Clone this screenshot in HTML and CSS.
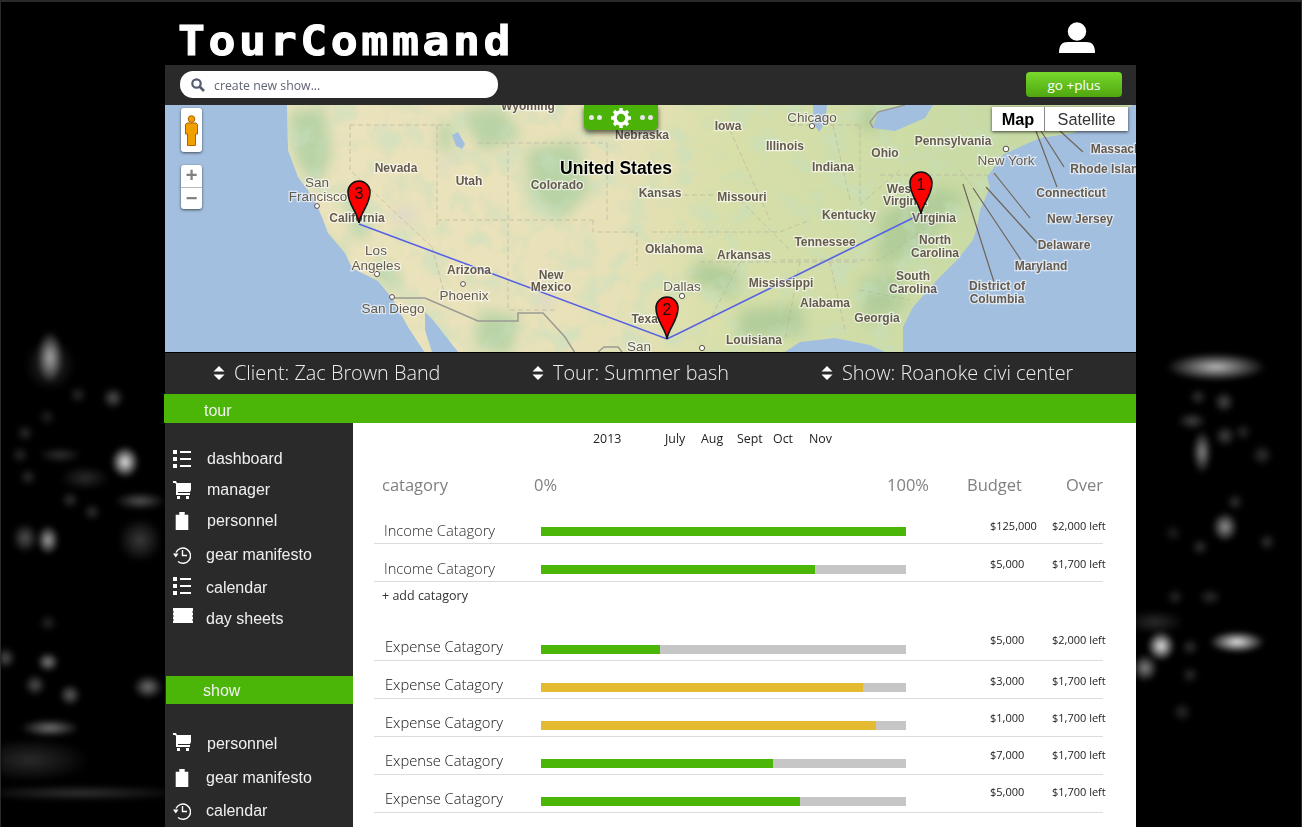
FILE: index.html
```html
<!DOCTYPE html>
<html lang="en">
<head>
    <meta charset="UTF-8">
    <meta name="viewport" content="width=device-width, initial-scale=1.0">
    <title>TourCommand</title>
    <link rel="stylesheet" href="styles.css">
</head>
<body>
    <div class="backdrop"></div>

    <svg class="icon-defs" aria-hidden="true">
        <defs>
            <symbol id="i-list" viewBox="0 0 18 18">
                <path fill="#fff" d="M0 0h4v4H0zM0 7h4v4H0zM0 14h4v4H0zM7 1h11v2H7zM7 8h11v2H7zM7 15h11v2H7z"/>
            </symbol>
            <symbol id="i-cart" viewBox="0 0 18 18">
                <path fill="#fff" d="M0 0h3l1 2h14v7l-1 2H5v1h12v2H3V3L2 2H0zM4 15h3v3H4zM13 15h3v3h-3z"/>
            </symbol>
            <symbol id="i-clip" viewBox="0 0 18 20">
                <path fill="#fff" d="M2 3h4V0h6v3h4v17H2z"/>
            </symbol>
            <symbol id="i-history" viewBox="0 0 18 18">
                <path fill="none" stroke="#fff" stroke-width="1.400" d="M3 6.500A7.600 7.600 0 1 1 5 15.500M9.500 4v5.500h4.500"/>
                <path fill="#fff" d="M0 7.500h5.500l-2.700 4z"/>
            </symbol>
            <symbol id="i-ticket" viewBox="0 0 20 16">
                <path fill="#fff" d="M0 0h20v3l-1 1 1 1v2l-1 1 1 1v2l-1 1 1 1v2H0v-2l1-1-1-1V9l1-1-1-1V5l1-1-1-1z"/>
            </symbol>
            <symbol id="i-updown" viewBox="0 0 12 14">
                <path fill="#fff" d="M6 0l5.500 5.500H.5zM6 14L.5 8.500h11z"/>
            </symbol>
            <symbol id="i-pin" viewBox="0 0 24 44">
                <path fill="#f00" stroke="#111" stroke-width="1.600" d="M12 43C10.500 32 1 25 1 12a11 11 0 0 1 22 0C23 25 13.500 32 12 43z"/>
            </symbol>
        </defs>
    </svg>

    <div class="page">
        <div class="header">
            <div class="logo">TourCommand</div>
            <svg class="user-icon" viewBox="0 0 36 31">
                <circle cx="18" cy="9.500" r="9.200" fill="#fff"/>
                <path fill="#fff" d="M0 31c0-8 3-11 9-11h18c6 0 9 3 9 11z"/>
            </svg>
        </div>

        <div class="search-bar">
            <div class="search-box">
                <svg class="search-icon" viewBox="0 0 14 14">
                    <circle cx="5.500" cy="5.500" r="4.200" fill="none" stroke="#565c70" stroke-width="2.200"/>
                    <path d="M8.500 8.500l4.500 4.500" stroke="#565c70" stroke-width="2.600"/>
                </svg>
                <input type="text" class="search-input" placeholder="create new show...">
            </div>
            <button class="go-button">go +plus</button>
        </div>

        <div class="map">
            <svg class="map-canvas" viewBox="165 105 971 247">
                <defs>
                    <linearGradient id="landFill" gradientUnits="userSpaceOnUse" x1="287" y1="0" x2="1000" y2="0">
                        <stop offset="0" stop-color="#ebe3bd"/>
                        <stop offset="0.45" stop-color="#e8e1b8"/>
                        <stop offset="0.62" stop-color="#d8dfa9"/>
                        <stop offset="1" stop-color="#c8daa4"/>
                    </linearGradient>
                    <clipPath id="landClip">
                        <path d="M287 105L288 150 298 177 313 197 322 217 328 233 345 253 352 268 378 281 392 298 408 327 425 353H783L800 342 835 338 870 345 885 352H903V327L913 307 937 280 957 260 973 240 977 227 980 210 990 187 987 177 1003 155 1040 138 1073 133 1110 115 1133 105z"/>
                    </clipPath>
                    <filter id="soft" x="-30%" y="-30%" width="160%" height="160%">
                        <feGaussianBlur stdDeviation="7"/>
                    </filter>
                    <filter id="terrain" x="0" y="0" width="100%" height="100%">
                        <feTurbulence type="fractalNoise" baseFrequency="0.04" numOctaves="4" seed="7"/>
                        <feColorMatrix type="matrix" values="0 0 0 0 0.56  0 0 0 0 0.74  0 0 0 0 0.52  3.600 0 0 0 -1.700"/>
                    </filter>
                </defs>

                <rect x="165" y="105" width="971" height="247" fill="#a3bfdf"/>

                <g clip-path="url(#landClip)">
                    <rect x="280" y="105" width="860" height="247" fill="url(#landFill)"/>
                    <g class="forest" filter="url(#soft)">
                        <path d="M288 112l36-6 8 50-14 30-22-22zM345 190l16 6 8 40-14 4zM378 260l22 14-4 16-22-14z"/>
                        <path d="M460 112l40-6 22 30-40 16zM525 150l50-10 16 50-30 30-30-20zM440 120l14 4-4 30-12-4z"/>
                        <path d="M320 232l24 20-6 10-24-20zM480 310l40 6-10 40-36-10z"/>
                    </g>
                    <g class="forest-deep" filter="url(#soft)">
                        <path d="M880 215l60-30 26 12-50 60-40 10zM700 260l40 10-4 30-50-20zM860 110l30-4 0 20-30 6z"/>
                        <path d="M860 280l40-10 4 40-40 14zM740 310l60-6 6 30-70 6z"/>
                    </g>
                    <rect class="terrain" x="280" y="105" width="860" height="247" filter="url(#terrain)"/>
                    <g class="salt" filter="url(#soft)">
                        <ellipse cx="405" cy="215" rx="13" ry="9"/>
                        <ellipse cx="447" cy="161" rx="8" ry="4"/>
                        <ellipse cx="545" cy="300" rx="8" ry="10"/>
                    </g>
                </g>

                <path class="water" d="M425 312L433 320 458 352H432L425 330zM452 135l6-3 7 12-3 5-6-3zM813 105h14l-2 18-6 9-5-8zM873 128l5-16 27-7h28l-8 13-30 13zM1003 155l30-14 4 3-32 14z"/>
                <path class="border-line" d="M392 298l33 0 53 23h40v-8h25l22 24 10 16M878 112l27-7M873 128l-3-6 8-10M598 352l6-5h14l4 5"/>

                <path class="state-line" d="M350 125H450M350 125V170L432 247M437 125V225M437 220H593M508 143V310M478 143H607M607 143V220M593 220V232H637V265M432 247L446 300M555 310H508M652 232H780L810 220M660 195H740M730 130L770 220M790 125H860M833 125L850 200M860 125V205L900 170M880 175H1000M780 260H880L930 225M700 262H860M800 262L785 340M830 262L845 330M860 290L910 300M960 170L975 190"/>
                <path class="state-line" d="M740 200L790 250M740 262L710 320"/>

                <g class="leader">
                    <path d="M1036 131L1057 187M1041 131L1064 167M1060 131L1083 152M994 173L1030 218M973 188L1021 260M986 187L1037 243M963 184L994 282"/>
                </g>

                <g class="dots">
                    <circle cx="317" cy="206" r="2.400"/>
                    <circle cx="377" cy="274" r="2.600"/>
                    <circle cx="392" cy="297" r="2.400"/>
                    <circle cx="463" cy="284" r="2.400"/>
                    <circle cx="682" cy="296" r="2.600"/>
                    <circle cx="812" cy="126" r="2.600"/>
                    <circle cx="1006" cy="149" r="2.800"/>
                    <circle cx="702" cy="348" r="2.600"/>
                </g>

                <polyline class="route" points="359,224 667,339 921,214"/>

                <g class="labels">
                    <text x="528" y="110">Wyoming</text>
                    <text x="642" y="139">Nebraska</text>
                    <text x="728" y="130">Iowa</text>
                    <text x="812" y="122" class="city">Chicago</text>
                    <text x="785" y="150">Illinois</text>
                    <text x="833" y="171">Indiana</text>
                    <text x="885" y="157">Ohio</text>
                    <text x="953" y="145">Pennsylvania</text>
                    <text x="1006" y="165" class="city">New York</text>
                    <text x="1116" y="153">Massach</text>
                    <text x="1108" y="173">Rhode Island</text>
                    <text x="1071" y="197">Connecticut</text>
                    <text x="1080" y="223">New Jersey</text>
                    <text x="1064" y="249">Delaware</text>
                    <text x="1041" y="270">Maryland</text>
                    <text x="997" y="290">District of</text>
                    <text x="997" y="303">Columbia</text>
                    <text x="934" y="222">Virginia</text>
                    <text x="901" y="193">West</text>
                    <text x="905" y="205">Virginia</text>
                    <text x="935" y="244">North</text>
                    <text x="935" y="257">Carolina</text>
                    <text x="913" y="280">South</text>
                    <text x="913" y="293">Carolina</text>
                    <text x="877" y="322">Georgia</text>
                    <text x="825" y="307">Alabama</text>
                    <text x="781" y="287">Mississippi</text>
                    <text x="744" y="259">Arkansas</text>
                    <text x="825" y="246">Tennessee</text>
                    <text x="849" y="219">Kentucky</text>
                    <text x="742" y="201">Missouri</text>
                    <text x="674" y="253">Oklahoma</text>
                    <text x="660" y="197">Kansas</text>
                    <text x="682" y="291" class="city">Dallas</text>
                    <text x="648" y="323">Texas</text>
                    <text x="754" y="344">Louisiana</text>
                    <text x="639" y="351" class="city">San</text>
                    <text x="557" y="189">Colorado</text>
                    <text x="469" y="185">Utah</text>
                    <text x="396" y="172">Nevada</text>
                    <text x="357" y="222">California</text>
                    <text x="317" y="187" class="city">San</text>
                    <text x="318" y="201" class="city">Francisco</text>
                    <text x="376" y="255" class="city">Los</text>
                    <text x="376" y="270" class="city">Angeles</text>
                    <text x="469" y="274">Arizona</text>
                    <text x="464" y="300" class="city">Phoenix</text>
                    <text x="551" y="279">New</text>
                    <text x="551" y="291">Mexico</text>
                    <text x="393" y="313" class="city">San Diego</text>
                    <text x="616" y="174" class="country">United States</text>
                </g>

                <use href="#i-pin" x="347" y="180" width="24" height="44"/>
                <use href="#i-pin" x="655" y="296" width="24" height="44"/>
                <use href="#i-pin" x="909" y="171" width="24" height="44"/>
                <text class="pin-num" x="359" y="199">3</text>
                <text class="pin-num" x="667" y="315">2</text>
                <text class="pin-num" x="921" y="190">1</text>
            </svg>

            <div class="pegman-box">
                <svg class="pegman" viewBox="0 0 13 31">
                    <circle cx="6.500" cy="4" r="3.300" fill="#f0a000" stroke="#b06000"/>
                    <path fill="#f0a000" stroke="#b06000" d="M2 8h9l1.500 1.500v9.500h-2v11.500h-8V19h-2V9.500z"/>
                </svg>
            </div>
            <div class="zoom-box">
                <div class="zoom-step">+</div>
                <div class="zoom-step">−</div>
            </div>
            <div class="gear-tab">
                <span class="gear-dot"></span><span class="gear-dot"></span>
                <svg class="gear" viewBox="0 0 20 20">
                    <circle cx="10" cy="10" r="6" fill="none" stroke="#fff" stroke-width="3.600"/>
                    <path stroke="#fff" stroke-width="3.400" d="M10 0v4M10 16v4M0 10h4M16 10h4M3 3l3 3M14 14l3 3M17 3l-3 3M6 14l-3 3"/>
                </svg>
                <span class="gear-dot"></span><span class="gear-dot"></span>
            </div>
            <div class="map-type">
                <div class="map-type-item map-type-on">Map</div>
                <div class="map-type-item">Satellite</div>
            </div>
        </div>

        <div class="selectors">
            <div class="selector sel-client"><svg class="updown"><use href="#i-updown"/></svg>Client: Zac Brown Band</div>
            <div class="selector sel-tour"><svg class="updown"><use href="#i-updown"/></svg>Tour: Summer bash</div>
            <div class="selector"><svg class="updown"><use href="#i-updown"/></svg>Show: Roanoke civi center</div>
        </div>

        <div class="tab-bar">
            <div class="tab-tour">tour</div>
            <div class="tab-fill"></div>
        </div>

        <div class="columns">
            <div class="sidebar">
                <ul class="nav-list nav-tour">
                    <li class="nav-item"><svg class="nav-icon"><use href="#i-list"/></svg>dashboard</li>
                    <li class="nav-item"><svg class="nav-icon"><use href="#i-cart"/></svg>manager</li>
                    <li class="nav-item"><svg class="nav-icon"><use href="#i-clip"/></svg>personnel</li>
                    <li class="nav-item nudge gap3"><svg class="nav-icon"><use href="#i-history"/></svg>gear manifesto</li>
                    <li class="nav-item nudge gap2"><svg class="nav-icon lift2"><use href="#i-list"/></svg>calendar</li>
                    <li class="nav-item nudge"><svg class="nav-icon ticket"><use href="#i-ticket"/></svg>day sheets</li>
                </ul>
                <div class="tab-show">show</div>
                <ul class="nav-list nav-show">
                    <li class="nav-item"><svg class="nav-icon lift2"><use href="#i-cart"/></svg>personnel</li>
                    <li class="nav-item nudge gap3"><svg class="nav-icon"><use href="#i-clip"/></svg>gear manifesto</li>
                    <li class="nav-item nudge gap2"><svg class="nav-icon"><use href="#i-history"/></svg>calendar</li>
                </ul>
            </div>

            <div class="content">
                <div class="timeline">
                    <span>2013</span><span>July</span><span>Aug</span><span>Sept</span><span>Oct</span><span>Nov</span>
                </div>

                <div class="table-head">
                    <span>catagory</span>
                    <span class="scale"><span>0%</span><span>100%</span></span>
                    <span>Budget</span>
                    <span>Over</span>
                </div>

                <div class="budget-rows">
                    <div class="row">
                        <span class="row-name">Income Catagory</span>
                        <div class="bar"><div class="fill" style="width:100%"></div></div>
                        <span class="amount">$125,000</span>
                        <span class="amount">$2,000 left</span>
                    </div>
                    <div class="row">
                        <span class="row-name">Income Catagory</span>
                        <div class="bar"><div class="fill" style="width:75%"></div></div>
                        <span class="amount">$5,000</span>
                        <span class="amount">$1,700 left</span>
                    </div>
                </div>

                <div class="add-row">+ add catagory</div>

                <div class="budget-rows expenses">
                    <div class="row">
                        <span class="row-name">Expense Catagory</span>
                        <div class="bar"><div class="fill" style="width:32.6%"></div></div>
                        <span class="amount up3">$5,000</span>
                        <span class="amount up3">$2,000 left</span>
                    </div>
                    <div class="row">
                        <span class="row-name">Expense Catagory</span>
                        <div class="bar"><div class="fill warn" style="width:88.2%"></div></div>
                        <span class="amount">$3,000</span>
                        <span class="amount">$1,700 left</span>
                    </div>
                    <div class="row">
                        <span class="row-name">Expense Catagory</span>
                        <div class="bar"><div class="fill warn" style="width:91.8%"></div></div>
                        <span class="amount up1">$1,000</span>
                        <span class="amount up1">$1,700 left</span>
                    </div>
                    <div class="row">
                        <span class="row-name">Expense Catagory</span>
                        <div class="bar"><div class="fill" style="width:63.6%"></div></div>
                        <span class="amount up2">$7,000</span>
                        <span class="amount up2">$1,700 left</span>
                    </div>
                    <div class="row">
                        <span class="row-name">Expense Catagory</span>
                        <div class="bar"><div class="fill" style="width:71%"></div></div>
                        <span class="amount up3">$5,000</span>
                        <span class="amount up3">$1,700 left</span>
                    </div>
                </div>
            </div>
        </div>
    </div>
</body>
</html>
```

FILE: styles.css
```css
html {
    height: 100%;
    background-color: #000;
}

body {
    box-sizing: border-box;
    height: 827px;
    margin: 0;
    overflow: hidden;
    border-top: 2px solid #2a2a2a;
    border-left: 1px solid #2a2a2a;
    border-right: 1px solid #2a2a2a;
    font-family: "Open Sans", sans-serif;
}

/* blurred city lights behind the page */
.backdrop {
    position: fixed;
    top: 0;
    left: 0;
    z-index: -1;
    width: 1302px;
    height: 827px;
    filter: blur(2.500px);
    background-repeat: no-repeat;
    background-image:
        /* left side */
        radial-gradient(ellipse 13px 26px at 50px 357px, #aaa, transparent),
        radial-gradient(ellipse 26px 26px at 50px 365px, #2a2a2a, transparent),
        radial-gradient(ellipse 14px 16px at 125px 462px, #eee, transparent),
        radial-gradient(ellipse 11px 11px at 113px 398px, #555, transparent),
        radial-gradient(ellipse 9px 9px at 78px 395px, #2c2c2c, transparent),
        radial-gradient(ellipse 9px 9px at 25px 433px, #2e2e2e, transparent),
        radial-gradient(ellipse 9px 9px at 47px 417px, #222, transparent),
        radial-gradient(ellipse 9px 9px at 20px 455px, #2a2a2a, transparent),
        radial-gradient(ellipse 9px 9px at 28px 477px, #2e2e2e, transparent),
        radial-gradient(ellipse 9px 9px at 70px 500px, #333, transparent),
        radial-gradient(ellipse 9px 9px at 92px 512px, #333, transparent),
        radial-gradient(ellipse 26px 9px at 140px 501px, #555, transparent),
        radial-gradient(ellipse 22px 22px at 140px 540px, #3a3a3a, transparent),
        radial-gradient(ellipse 11px 15px at 48px 540px, #aaa, transparent),
        radial-gradient(ellipse 13px 15px at 25px 538px, #555, transparent),
        radial-gradient(ellipse 25px 12px at 85px 478px, #2c2c2c, transparent),
        radial-gradient(ellipse 22px 8px at 60px 455px, #333, transparent),
        radial-gradient(ellipse 11px 10px at 48px 662px, #888, transparent),
        radial-gradient(ellipse 11px 11px at 5px 658px, #555, transparent),
        radial-gradient(ellipse 11px 11px at 70px 695px, #666, transparent),
        radial-gradient(ellipse 11px 11px at 35px 685px, #555, transparent),
        radial-gradient(ellipse 9px 9px at 48px 623px, #2a2a2a, transparent),
        radial-gradient(ellipse 30px 9px at 50px 728px, #777, transparent),
        radial-gradient(ellipse 15px 12px at 148px 687px, #777, transparent),
        radial-gradient(ellipse 60px 22px at 30px 760px, #2a2a2a, transparent),
        radial-gradient(ellipse 110px 8px at 80px 793px, #333, transparent),
        /* right side */
        radial-gradient(ellipse 50px 14px at 1216px 367px, #bbb, transparent),
        radial-gradient(ellipse 10px 22px at 1202px 452px, #888, transparent),
        radial-gradient(ellipse 11px 11px at 1224px 402px, #4a4a4a, transparent),
        radial-gradient(ellipse 9px 9px at 1198px 397px, #333, transparent),
        radial-gradient(ellipse 15px 9px at 1192px 421px, #444, transparent),
        radial-gradient(ellipse 11px 11px at 1225px 436px, #444, transparent),
        radial-gradient(ellipse 9px 9px at 1243px 432px, #2c2c2c, transparent),
        radial-gradient(ellipse 11px 11px at 1262px 455px, #333, transparent),
        radial-gradient(ellipse 13px 15px at 1225px 527px, #999, transparent),
        radial-gradient(ellipse 14px 15px at 1161px 646px, #eee, transparent),
        radial-gradient(ellipse 13px 14px at 1145px 668px, #888, transparent),
        radial-gradient(ellipse 28px 11px at 1237px 642px, #eee, transparent),
        radial-gradient(ellipse 30px 12px at 1155px 622px, #2c2c2c, transparent),
        radial-gradient(ellipse 9px 9px at 1267px 542px, #333, transparent),
        radial-gradient(ellipse 9px 9px at 1235px 502px, #333, transparent),
        radial-gradient(ellipse 9px 9px at 1200px 547px, #333, transparent),
        radial-gradient(ellipse 9px 9px at 1173px 533px, #222, transparent),
        radial-gradient(ellipse 9px 9px at 1175px 597px, #2a2a2a, transparent),
        radial-gradient(ellipse 12px 9px at 1210px 597px, #2e2e2e, transparent),
        radial-gradient(ellipse 9px 9px at 1190px 647px, #333, transparent),
        radial-gradient(ellipse 9px 9px at 1190px 675px, #2e2e2e, transparent),
        radial-gradient(ellipse 10px 10px at 1182px 712px, #2c2c2c, transparent);
}

.icon-defs {
    display: none;
}

.page {
    width: 971px;
    margin-left: 164px;
}

/* header */
.header {
    display: flex;
    justify-content: space-between;
    height: 63px;
    padding: 0 41px 0 13px;
}

.logo {
    font-family: "DejaVu Sans Mono", monospace;
    font-weight: bold;
    font-size: 40px;
    line-height: 31px;
    letter-spacing: 3.200px;
    padding-top: 24px;
    color: #fff;
    -webkit-text-stroke: 1px #fff;
    transform: scaleX(1.12);
    transform-origin: left top;
}

.user-icon {
    width: 36px;
    height: 31px;
    margin-top: 20px;
}

/* search row */
.search-bar {
    display: flex;
    align-items: center;
    justify-content: space-between;
    height: 40px;
    padding: 0 14px 0 15px;
    background-color: #2a2a2a;
}

.search-box {
    display: flex;
    align-items: center;
    box-sizing: border-box;
    width: 318px;
    height: 27px;
    margin-top: -1px;
    padding-left: 11px;
    background-color: #fff;
    border-radius: 13px;
}

.search-icon {
    width: 14px;
    height: 14px;
    margin-right: 9px;
}

.search-input {
    flex: 1;
    min-width: 0;
    padding: 2px 0 0;
    border: none;
    outline: none;
    background: none;
    font-family: "Open Sans", sans-serif;
    font-size: 12.300px;
}

.search-input::placeholder {
    color: #5f6474;
    opacity: 1;
}

.go-button {
    width: 96px;
    height: 25px;
    margin-top: -1px;
    padding: 0;
    border: none;
    border-radius: 4px;
    background: linear-gradient(#78d92c, #4fa60f);
    color: #fff;
    font-family: "Open Sans", sans-serif;
    font-size: 13.500px;
}

/* map */
.map {
    position: relative;
    height: 247px;
    overflow: hidden;
    border-bottom: 1px solid #000;
}

.map-canvas {
    display: block;
    width: 971px;
    height: 247px;
    filter: blur(0.350px);
}

.forest path {
    fill: #b9d3a6;
}

.forest-deep path {
    fill: #b2cd9a;
}

.terrain {
    opacity: 0.5;
}

.salt ellipse {
    fill: #dcd8c8;
}

.water {
    fill: #a3bfdf;
}

.border-line {
    fill: none;
    stroke: #9a9a94;
    stroke-width: 1.500;
}

.state-line {
    fill: none;
    stroke: #b5b29e;
    stroke-width: 0.800;
    stroke-dasharray: 5 3;
    opacity: 0.8;
}

.leader path {
    fill: none;
    stroke: #6f655a;
    stroke-width: 1.200;
}

.dots circle {
    fill: #fff;
    stroke: #5c5046;
    stroke-width: 1;
}

.route {
    fill: none;
    stroke: #5660e4;
    stroke-width: 1.500;
}

.labels text {
    font-family: "Liberation Sans", sans-serif;
    font-size: 12px;
    font-weight: bold;
    fill: #655a4e;
    text-anchor: middle;
    paint-order: stroke;
    stroke: rgba(255, 255, 255, 0.6);
    stroke-width: 2.500px;
}

.labels .city {
    font-weight: normal;
    font-size: 13.500px;
}

.labels .country {
    font-size: 17.500px;
    fill: #000;
}

.pin-num {
    font-family: "Liberation Sans", sans-serif;
    font-size: 16px;
    fill: #111;
    text-anchor: middle;
}

.pegman-box {
    position: absolute;
    left: 16px;
    top: 3px;
    display: flex;
    justify-content: center;
    align-items: center;
    width: 21px;
    height: 44px;
    background-color: #fff;
    border-radius: 3px;
    box-shadow: 0 1px 3px rgba(0, 0, 0, 0.6);
}

.pegman {
    width: 13px;
    height: 31px;
}

.zoom-box {
    position: absolute;
    left: 16px;
    top: 60px;
    width: 21px;
    background-color: #fff;
    border-radius: 3px;
    box-shadow: 0 1px 3px rgba(0, 0, 0, 0.6);
}

.zoom-step {
    height: 22px;
    font-family: "Liberation Sans", sans-serif;
    font-size: 20px;
    font-weight: bold;
    line-height: 21px;
    text-align: center;
    color: #808080;
}

.zoom-step + .zoom-step {
    border-top: 1px solid #bbb;
    height: 21px;
}

.gear-tab {
    position: absolute;
    left: 419px;
    top: 0;
    display: flex;
    align-items: center;
    justify-content: center;
    gap: 3px;
    width: 74px;
    height: 25px;
    background-color: #4bb308;
    border-radius: 0 0 5px 5px;
    box-shadow: 0 3px 5px rgba(0, 0, 0, 0.6);
}

.gear-dot {
    width: 5px;
    height: 5px;
    border-radius: 50%;
    background-color: #e6e6e6;
}

.gear {
    width: 20px;
    height: 20px;
    margin: 0 6px;
}

.map-type {
    position: absolute;
    left: 827px;
    top: 2px;
    display: flex;
    height: 24px;
    background-color: #fff;
    box-shadow: 0 1px 3px rgba(0, 0, 0, 0.7);
    font-family: "Liberation Sans", sans-serif;
    font-size: 16.300px;
    line-height: 24px;
    color: #333;
}

.map-type-item {
    width: 83px;
    text-align: center;
}

.map-type-on {
    width: 52px;
    border-right: 1px solid #888;
    font-weight: bold;
    color: #000;
}

/* client, tour, show pickers */
.selectors {
    display: flex;
    box-sizing: border-box;
    height: 41px;
    padding-bottom: 2px;
    background-color: #2a2a2a;
    color: #ededed;
    font-size: 19.850px;
    font-weight: 300;
    line-height: 39px;
}

.selector {
    display: flex;
    align-items: center;
}

.updown {
    width: 12px;
    height: 14px;
    margin-right: 9px;
}

.sel-client {
    box-sizing: border-box;
    width: 367px;
    padding-left: 48px;
}

.sel-tour {
    width: 289px;
}

/* green tab bar */
.tab-bar {
    display: flex;
    height: 30px;
}

.tab-tour {
    box-sizing: border-box;
    width: 189px;
    height: 29px;
    margin-left: -1px;
    padding-left: 40px;
    background-color: #4bb508;
    font-family: "Liberation Sans", sans-serif;
    font-size: 16px;
    line-height: 33px;
    color: #f2f2f2;
}

.tab-fill {
    flex: 1;
    background-color: #4bb508;
}

/* columns */
.columns {
    display: flex;
    margin-top: -1px;
    height: 404px;
}

.sidebar {
    width: 188px;
    background-color: #2a2a2a;
    font-family: "Liberation Sans", sans-serif;
    font-size: 16px;
    color: #efefef;
}

.nav-list {
    margin: 0;
    padding: 0;
    list-style-type: none;
}

.nav-tour {
    padding-top: 20px;
}

.nav-show {
    padding-top: 24px;
}

.nav-item {
    display: flex;
    align-items: center;
    height: 31px;
    padding-left: 8px;
}

.nav-icon {
    flex: none;
    width: 18px;
    height: 18px;
    margin-right: 16px;
}

.nudge .nav-icon {
    margin-right: 15px;
}

.nav-item .lift2 {
    margin-top: -4px;
}

.nudge .ticket {
    width: 20px;
    height: 16px;
    margin-top: -6px;
    margin-right: 13px;
}

.gap3 {
    margin-top: 3px;
}

.gap2 {
    margin-top: 2px;
}

.tab-show {
    box-sizing: border-box;
    width: 188px;
    height: 28px;
    margin-top: 42px;
    margin-left: 1px;
    padding-left: 37px;
    background-color: #4bb508;
    line-height: 30px;
    color: #f2f2f2;
}

.content {
    flex: 1;
    background-color: #fff;
    color: #333;
}

.timeline {
    display: grid;
    grid-template-columns: 72px 36px 36px 36px 36px 36px;
    padding: 7px 0 0 240px;
    font-size: 12.400px;
    line-height: 18px;
    color: #222;
}

.table-head {
    display: grid;
    grid-template-columns: 152px 395px 99px 70px;
    margin-top: 25px;
    padding-left: 29px;
    font-size: 16.500px;
    line-height: 24px;
    color: #808080;
}

.table-head span:nth-child(3),
.table-head span:nth-child(4) {
    padding-left: 38px;
}

.scale {
    display: flex;
    justify-content: space-between;
}

.budget-rows {
    width: 729px;
    margin: 9px 0 0 21px;
}

.expenses {
    margin-top: 0;
}

.row {
    display: grid;
    grid-template-columns: 167px 449px 62px 51px;
    box-sizing: border-box;
    height: 38px;
    border-bottom: 1px solid #dcdcdc;
}

.row-name {
    padding: 14px 0 0 10px;
    font-size: 14.700px;
    font-weight: 300;
    line-height: 20px;
    color: #2a2a2a;
    white-space: nowrap;
}

.expenses .row-name {
    padding-left: 11px;
    padding-top: 13px;
    color: #111;
}

.bar {
    height: 9px;
    margin: 21px 84px 0 0;
    background-color: #c6c6c6;
}

.expenses .bar {
    margin-top: 22px;
}

.fill {
    height: 100%;
    background-color: #4bb508;
}

.warn {
    background-color: #e4bb30;
}

.amount {
    margin-top: 12px;
    font-size: 11px;
    line-height: 16px;
    color: #222;
    white-space: nowrap;
}

.amount.up1 {
    margin-top: 11px;
}

.amount.up2 {
    margin-top: 10px;
}

.amount.up3 {
    margin-top: 9px;
}

.add-row {
    box-sizing: border-box;
    height: 41px;
    padding: 5px 0 0 29px;
    font-size: 12.500px;
    line-height: 18px;
    color: #333;
}
```
